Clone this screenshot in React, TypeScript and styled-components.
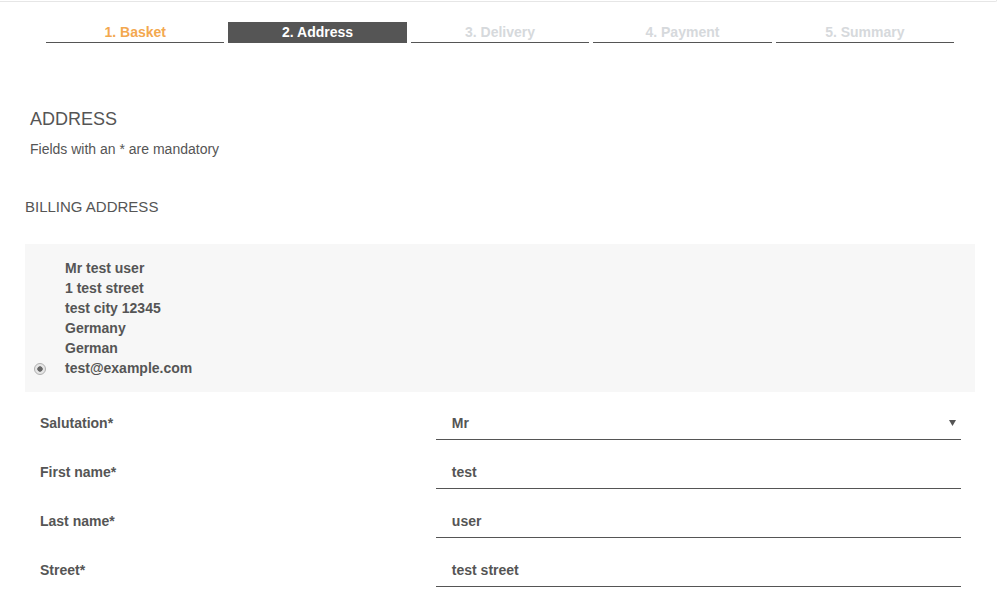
import React from 'react';
import styled, { createGlobalStyle } from 'styled-components';

const GlobalStyle = createGlobalStyle`
    html, body {
        margin: 0;
        padding: 0;
        background: #fff;
    }

    body {
        font-family: "Liberation Sans", Arial, sans-serif;
        color: #555;
    }
`;

const steps = ['1. Basket', '2. Address', '3. Delivery', '4. Payment', '5. Summary'];
const activeStep = 1;

const addressLines = ['Mr test user', '1 test street', 'test city 12345', 'Germany', 'German', 'test@example.com'];

const fields = [
    { label: 'Salutation*', value: 'Mr', select: true },
    { label: 'First name*', value: 'test' },
    { label: 'Last name*', value: 'user' },
    { label: 'Street*', value: 'test street' },
];

const Page = styled.div`
    width: 1000px;
    height: 600px;
    overflow: hidden;
`;

const TopEdge = styled.div`
    width: 996px;
    height: 1px;
    border-bottom: 1px solid #e6e6e6;
    border-right: 1px solid #e6e6e6;
    border-bottom-right-radius: 3px;
`;

const StepBar = styled.div`
    display: flex;
    gap: 4px;
    width: 908px;
    margin: 20px 0 0 46px;
`;

const StepItem = styled.div<{ $state: 'done' | 'active' | 'todo' }>`
    flex: 1;
    height: 21px;
    box-sizing: border-box;
    border-bottom: 1px solid #555;
    text-align: center;
    font-size: 14px;
    font-weight: bold;
    line-height: 20px;
    background: ${p => (p.$state === 'active' ? '#555' : 'transparent')};
    color: ${p => (p.$state === 'active' ? '#fff' : p.$state === 'done' ? '#f3a84f' : '#d6d9dc')};
`;

const Content = styled.div`
    padding: 0 25px;
`;

const Heading = styled.h2`
    margin: 65px 0 0 5px;
    font-size: 18px;
    font-weight: normal;
    line-height: 22px;
`;

const Hint = styled.p`
    margin: 9px 0 0 5px;
    font-size: 14px;
    line-height: 20px;
`;

const SubHeading = styled.h3`
    margin: 38px 0 0;
    font-size: 15px;
    font-weight: normal;
    line-height: 20px;
`;

const AddressCard = styled.div`
    display: flex;
    gap: 20px;
    margin-top: 27px;
    padding: 14px 10px 14px 9px;
    background: #f7f7f7;
`;

const Radio = styled.span`
    align-self: flex-end;
    width: 12px;
    height: 12px;
    margin-bottom: 3px;
    box-sizing: border-box;
    border-radius: 50%;
    border: 1px solid #b0b0b0;
    background: radial-gradient(circle, #666 0 2.4px, #e6e6e6 3px);
`;

const AddressText = styled.div`
    margin-left: -1px;
    font-size: 14px;
    font-weight: bold;
    line-height: 20px;
`;

const Form = styled.div`
    margin-top: 14px;
`;

const FormRow = styled.div`
    display: grid;
    grid-template-columns: 5fr 7fr;
    height: 34px;
    margin-bottom: 15px;
`;

const Label = styled.label`
    display: flex;
    align-items: center;
    padding: 0 15px;
    font-size: 14px;
    font-weight: bold;
`;

const InputCol = styled.div`
    padding: 0 14px 0 15px;
`;

const Field = styled.div`
    display: flex;
    align-items: center;
    justify-content: space-between;
    height: 34px;
    box-sizing: border-box;
    padding: 0 5px 0 16px;
    border-bottom: 1px solid #555;
    font-size: 14px;
    font-weight: bold;
`;

const Caret = () => (
    <svg width="7" height="6" viewBox="0 0 7 6">
        <polygon points="0,0 7,0 3.5,6" fill="#555" />
    </svg>
);

const App = () => {
    return (
        <Page>
            <GlobalStyle />
            <TopEdge />
            <StepBar>
                {steps.map((step, i) => (
                    <StepItem key={step} $state={i < activeStep ? 'done' : i === activeStep ? 'active' : 'todo'}>
                        {step}
                    </StepItem>
                ))}
            </StepBar>
            <Content>
                <Heading>ADDRESS</Heading>
                <Hint>Fields with an * are mandatory</Hint>
                <SubHeading>BILLING ADDRESS</SubHeading>
                <AddressCard>
                    <Radio />
                    <AddressText>
                        {addressLines.map(line => (
                            <div key={line}>{line}</div>
                        ))}
                    </AddressText>
                </AddressCard>
                <Form>
                    {fields.map(f => (
                        <FormRow key={f.label}>
                            <Label>{f.label}</Label>
                            <InputCol>
                                <Field>
                                    <span>{f.value}</span>
                                    {f.select && <Caret />}
                                </Field>
                            </InputCol>
                        </FormRow>
                    ))}
                </Form>
            </Content>
        </Page>
    );
};

export default App;
